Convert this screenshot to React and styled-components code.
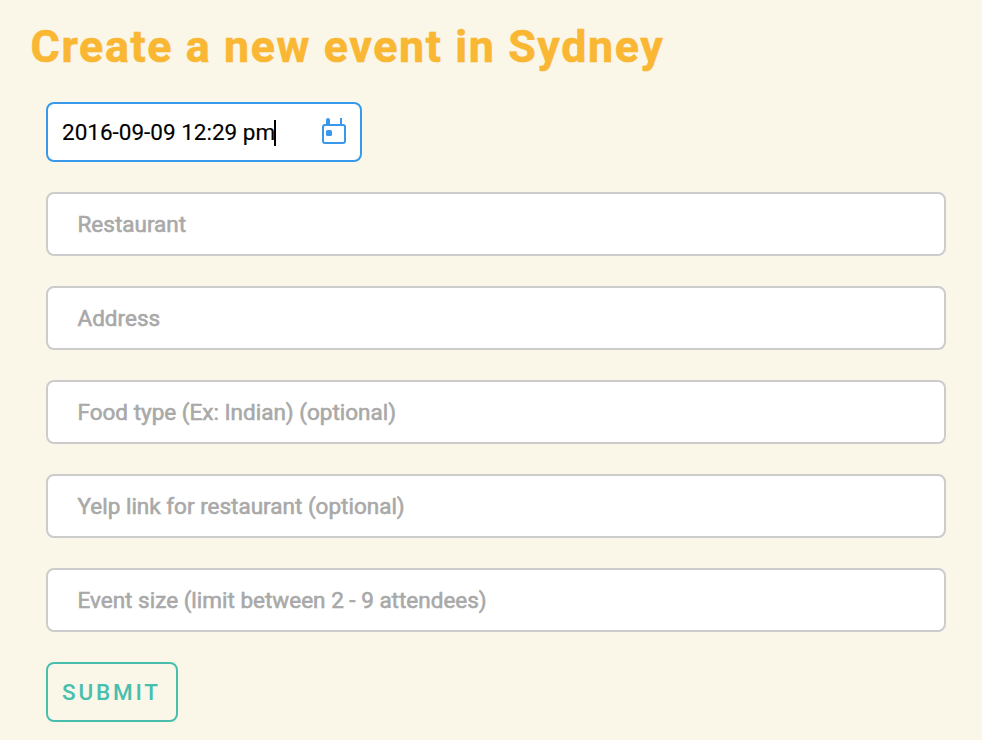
import React from "react";
import styled, { createGlobalStyle } from "styled-components";

const GlobalStyle = createGlobalStyle`
  * { box-sizing: border-box; }
  html, body { margin: 0; background: #faf6e8; }
  body { font-family: Roboto, sans-serif; }
`;

const Page = styled.main`
  height: 740px;
  overflow: hidden;
  padding: 20px 36px 0 30px;
  background: #faf6e8;
`;

const Title = styled.h1`
  margin: 0;
  height: 82px;
  padding-left: 0.6px;
  color: #f9b733;
  font-size: 44.8px;
  font-weight: 700;
  line-height: 53px;
  letter-spacing: 1.6px;
  -webkit-text-stroke: 0.6px #f9b733;
  white-space: nowrap;
`;

const Form = styled.div`
  display: flex;
  flex-direction: column;
  align-items: flex-start;
  gap: 30px;
  padding-left: 16px;
`;

const DateField = styled.div`
  display: flex;
  align-items: center;
  width: 316px;
  height: 60px;
  padding: 0 14px;
  border: 2px solid #3899ec;
  border-radius: 8px;
  background: #fff;
  color: #000;
  font-size: 22.5px;
  -webkit-text-stroke: 0.15px #000;
  white-space: nowrap;
`;

const Caret = styled.span`
  width: 2px;
  height: 26px;
  margin: 2px 0 0 -1px;
  background: #000;
`;

const CalendarIcon = styled.svg`
  margin-left: auto;
  flex: none;
`;

const Field = styled.div`
  display: flex;
  align-items: center;
  width: 900px;
  height: 64px;
  padding: 0 30px 0 29.5px;
  border: 2px solid #ccc;
  border-radius: 8px;
  background: #fff;
  color: #a9a9a9;
  font-size: 22.5px;
  line-height: 26px;
  -webkit-text-stroke: 0.6px #a9a9a9;
  white-space: nowrap;
`;

const Submit = styled.button`
  width: 132px;
  height: 60px;
  padding: 0 1px 0 0;
  border: 2px solid #48bfad;
  border-radius: 8px;
  background: transparent;
  color: #48bfad;
  font: 500 22.5px Roboto, sans-serif;
  letter-spacing: 2.8px;
`;

const fields = [
  "Restaurant",
  "Address",
  "Food type (Ex: Indian) (optional)",
  "Yelp link for restaurant (optional)",
  "Event size (limit between 2 - 9 attendees)",
];

export default function App() {
  return (
    <Page>
      <GlobalStyle />
      <Title>Create a new event in Sydney</Title>
      <Form>
        <DateField>
          <span>2016-09-09 12:29 pm</span>
          <Caret />
          <CalendarIcon width="24" height="28" viewBox="0 0 24 28">
            <rect x="1" y="7" width="22" height="18" rx="2" fill="none" stroke="#3899ec" strokeWidth="2" />
            <path d="M4 6V2q0-2 2-2t2 2v4z" fill="#3899ec" />
            <path d="M18 0h2v6h-2z" fill="#3899ec" />
            <rect x="4" y="12" width="6" height="6" rx="1.5" fill="#3899ec" />
          </CalendarIcon>
        </DateField>
        {fields.map((label) => (
          <Field key={label}>{label}</Field>
        ))}
        <Submit>SUBMIT</Submit>
      </Form>
    </Page>
  );
}
